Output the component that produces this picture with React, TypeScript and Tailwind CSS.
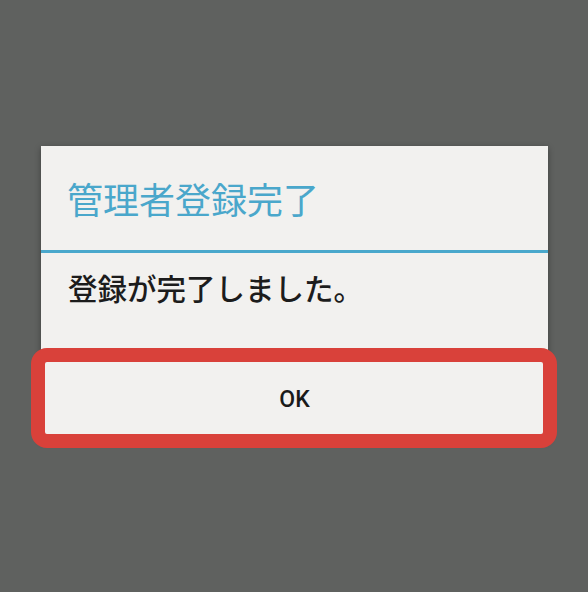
import React from "react";

export default function App() {
  return (
    <div
      className="w-[588px] h-[592px] bg-[#5f615f] pt-[146px] pl-[41px] overflow-hidden"
      style={{ fontFamily: '"Noto Sans CJK JP", "Noto Sans", sans-serif' }}
    >
      <div className="w-[507px] bg-[#f2f1ef] shadow-[0_2px_6px_rgba(0,0,0,0.35)] flex flex-col">
        <div className="h-[104px] flex items-center pl-[26px]">
          <span className="text-[36px] leading-none text-[#4aa7cb] font-normal">管理者登録完了</span>
        </div>
        <div className="h-[3px] bg-[#4aa8cc]" />
        <div className="h-[95px] pt-[20px] pl-[27px]">
          <span className="text-[29.5px] leading-none text-[#1c1c1c] font-medium">登録が完了しました。</span>
        </div>
        <div className="relative h-[92px] flex items-center justify-center pt-[10px]">
          <span
            className="text-[23px] leading-none text-[#1a1a1a] font-medium"
            style={{ fontFamily: 'Roboto, "Noto Sans", sans-serif' }}
          >
            OK
          </span>
          <div className="absolute left-[-10px] top-0 w-[526px] h-[100px] border-[14px] border-[#d9413a] rounded-[16px] pointer-events-none" />
        </div>
      </div>
    </div>
  );
}
